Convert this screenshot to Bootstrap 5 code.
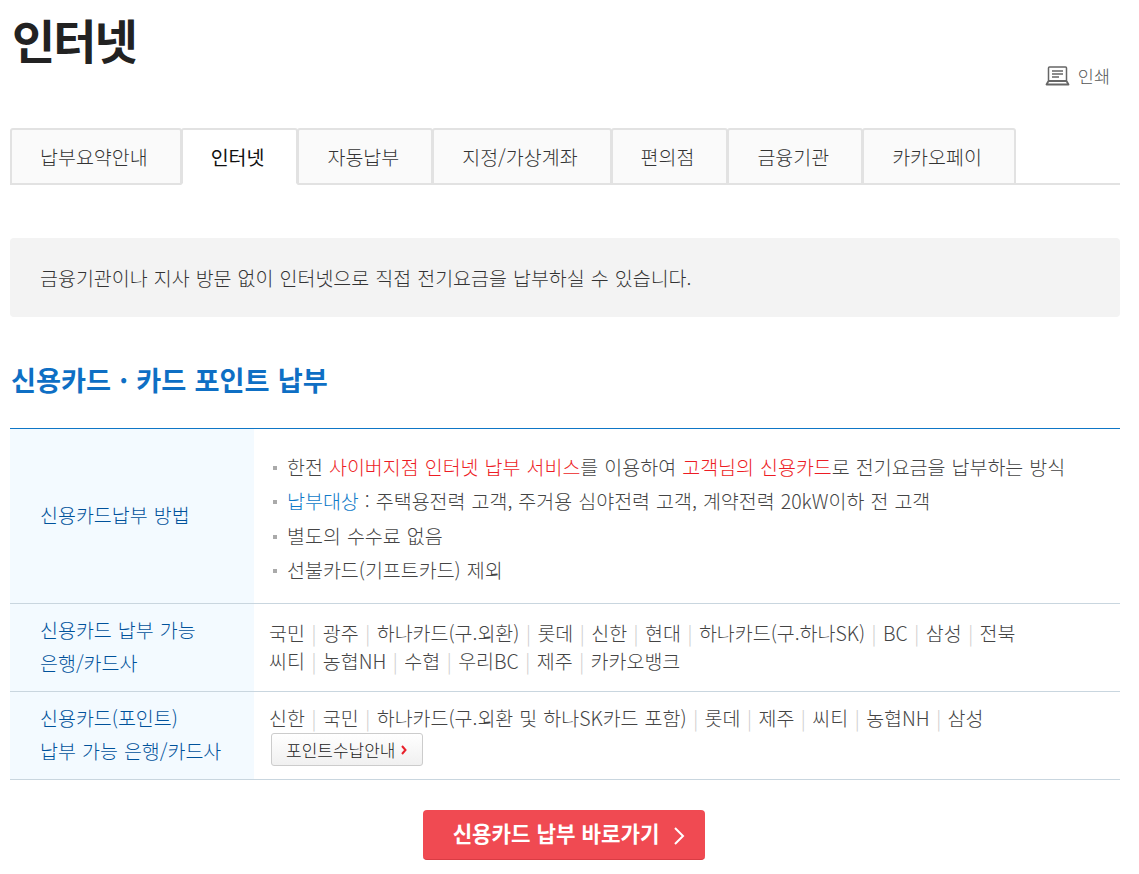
<!DOCTYPE html>
<html lang="ko">
<head>
    <meta charset="UTF-8">
    <meta name="viewport" content="width=device-width, initial-scale=1.0">
    <title>인터넷</title>
    <link href="https://cdn.jsdelivr.net/npm/bootstrap@5.3.3/dist/css/bootstrap.min.css" rel="stylesheet">
    <style>
        body {
            font-family: "Noto Sans CJK KR", "Liberation Sans", sans-serif;
            font-size: 19.5px;
            font-weight: 300;
            word-spacing: .6px;
            color: #444;
            background: #fff;
            overflow: hidden;
        }
        .page-wrap { width: 1110px; margin-left: 10px; }
        .page-top { height: 128px; }
        .page-title { font-size: 47px; font-weight: 700; color: #222; line-height: 60px; padding: 9px 0 0 2px; margin: 0; letter-spacing: -2px; }
        .print-link { color: #555; font-size: 17.5px; margin-top: 63px; margin-right: 10px; text-decoration: none; }
        .bill-tabs { height: 57px; border-bottom: 2px solid #e2e2e2; }
        .bill-tabs .nav-link {
            height: 57px; margin-right: -1px; padding: 0 32px 0 28px; line-height: 53px;
            color: #333; background: #fafafa;
            border: 2px solid #e2e2e2; border-radius: 3px 3px 0 0;
        }
        .bill-tabs .nav-link.active { background: #fff; color: #111; font-weight: 400; border-bottom-color: #fff; position: relative; z-index: 1; }
        .notice-box { margin-top: 53px; height: 79px; padding: 0 30px; line-height: 80px; background: #f3f3f3; border-radius: 4px; color: #333; }
        .sect-title { margin: 45px 0 32px; height: 34px; line-height: 34px; font-size: 27.2px; font-weight: 700; color: #0e6fc4; padding-left: 1px; }
        .pay-table { margin: 0; border-top: 1px solid #0e76c6; table-layout: fixed; }
        .pay-table th, .pay-table td { border-bottom: 1px solid #c9d6df; vertical-align: middle; padding: 0; }
        .pay-table th { width: 244px; padding: 0 0 4px 30px; background: #f3faff; font-weight: 300; color: #00529b; line-height: 33px; }
        .pay-table td { padding-left: 15px; color: #444; font-weight: 300; }
        .row-method { height: 175px; }
        .row-banks { height: 88px; }
        .dot-list { margin: 0; padding: 5px 0 0 4px; list-style: none; }
        .dot-list li { height: 34.4px; line-height: 34px; }
        .dot-list li::before { content: ""; display: inline-block; width: 4px; height: 4px; background: #aaa; margin: 0 10px 5px 0; }
        .txt-red { color: #ed1c24; }
        .txt-blue { color: #0e7ac8; }
        .pay-table td.bank-lines { line-height: 28px; padding-bottom: 2px; }
        .pay-table td.bank-guide { padding-bottom: 1px; }
        .bank-lines i { font-style: normal; color: #ccc; padding: 0 6.5px; }
        .guide-btn {
            display: inline-flex; align-items: center; gap: 6px; height: 33px; padding: 0 15px 0 14px; margin: 1px 0 0 2px;
            font-size: 17px; color: #222; background: linear-gradient(#fff, #f0f0f0);
            border: 1px solid #ccc; border-radius: 3px;
        }
        .go-btn {
            width: 282px; height: 50px; margin: 30px 2px 0 0; font-size: 21.2px; font-weight: 700; color: #fff;
            background: #f04a52; border: 0; border-bottom: 1px solid #d93c44; border-radius: 4px; padding: 0 0 4px 10px;
        }
        .go-btn:hover { background: #f04a52; color: #fff; }
    </style>
</head>
<body>
<div class="page-wrap">
    <div class="page-top d-flex justify-content-between align-items-start">
        <h1 class="page-title">인터넷</h1>
        <a href="#" class="print-link d-flex align-items-center gap-2">
            <svg width="25" height="20" viewBox="0 0 25 20" fill="none" stroke="#666" stroke-width="1.5">
                <rect x="3.500" y="1" width="18" height="14" rx="1"/>
                <path d="M7 5h11M7 8h11M7 11h7"/>
                <path d="M1.500 18.500h22l-2-3.500h-18z" stroke-width="1.800" stroke-linejoin="round"/>
            </svg>
            인쇄
        </a>
    </div>

    <ul class="nav bill-tabs">
        <li class="nav-item"><a class="nav-link" href="#">납부요약안내</a></li>
        <li class="nav-item"><a class="nav-link active" href="#">인터넷</a></li>
        <li class="nav-item"><a class="nav-link" href="#">자동납부</a></li>
        <li class="nav-item"><a class="nav-link" href="#">지정/가상계좌</a></li>
        <li class="nav-item"><a class="nav-link" href="#">편의점</a></li>
        <li class="nav-item"><a class="nav-link" href="#">금융기관</a></li>
        <li class="nav-item"><a class="nav-link" href="#">카카오페이</a></li>
    </ul>

    <div class="notice-box">금융기관이나 지사 방문 없이 인터넷으로 직접 전기요금을 납부하실 수 있습니다.</div>

    <h2 class="sect-title">신용카드 · 카드 포인트 납부</h2>

    <table class="table pay-table">
        <tbody>
            <tr class="row-method">
                <th>신용카드납부 방법</th>
                <td>
                    <ul class="dot-list">
                        <li>한전 <span class="txt-red">사이버지점 인터넷 납부 서비스</span>를 이용하여 <span class="txt-red">고객님의 신용카드</span>로 전기요금을 납부하는 방식</li>
                        <li><span class="txt-blue">납부대상</span> : 주택용전력 고객, 주거용 심야전력 고객, 계약전력 20kW이하 전 고객</li>
                        <li>별도의 수수료 없음</li>
                        <li>선불카드(기프트카드) 제외</li>
                    </ul>
                </td>
            </tr>
            <tr class="row-banks">
                <th>신용카드 납부 가능<br>은행/카드사</th>
                <td class="bank-lines">국민<i>|</i>광주<i>|</i>하나카드(구.외환)<i>|</i>롯데<i>|</i>신한<i>|</i>현대<i>|</i>하나카드(구.하나SK)<i>|</i>BC<i>|</i>삼성<i>|</i>전북<br>씨티<i>|</i>농협NH<i>|</i>수협<i>|</i>우리BC<i>|</i>제주<i>|</i>카카오뱅크</td>
            </tr>
            <tr class="row-banks">
                <th>신용카드(포인트)<br>납부 가능 은행/카드사</th>
                <td class="bank-lines bank-guide">신한<i>|</i>국민<i>|</i>하나카드(구.외환 및 하나SK카드 포함)<i>|</i>롯데<i>|</i>제주<i>|</i>씨티<i>|</i>농협NH<i>|</i>삼성<br>
                    <a href="#" class="guide-btn text-decoration-none">포인트수납안내
                        <svg width="6" height="10" viewBox="0 0 6 10" fill="none" stroke="#e8202a" stroke-width="2"><path d="M1 1l3.500 4L1 9"/></svg>
                    </a>
                </td>
            </tr>
        </tbody>
    </table>

    <div class="text-center">
        <button type="button" class="btn go-btn">신용카드 납부 바로가기
            <svg class="ms-2" width="12" height="20" viewBox="0 0 12 20" fill="none" stroke="#fff" stroke-width="2"><path d="M2 2l8 8-8 8"/></svg>
        </button>
    </div>
</div>
<script src="https://cdn.jsdelivr.net/npm/bootstrap@5.3.3/dist/js/bootstrap.bundle.min.js"></script>
</body>
</html>
